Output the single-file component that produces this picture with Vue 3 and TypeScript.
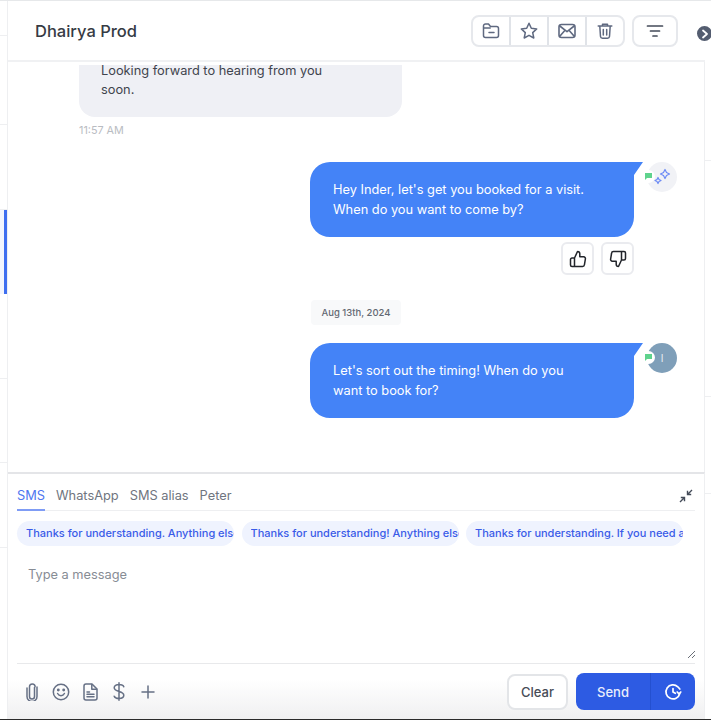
<script setup lang="ts">
const tabs: string[] = ['WhatsApp', 'SMS alias', 'Peter']
const chips: string[] = [
  'Thanks for understanding. Anything else I can help with?',
  'Thanks for understanding! Anything else you need today?',
  'Thanks for understanding. If you need anything, let me know.'
]
const railRows: number[] = [1, 2, 3]
</script>

<template>
  <div class="screen">
    <aside class="rail-left">
      <div class="rail-row first"></div>
      <div class="rail-row second"></div>
      <div class="rail-row"></div>
      <div class="rail-row active"></div>
      <div class="rail-row" v-for="r in railRows" :key="r"></div>
    </aside>

    <main class="panel">
      <header class="head">
        <h1 class="title">Dhairya Prod</h1>
        <div class="tools">
          <div class="tool-group">
            <button class="tool">
              <svg width="20" height="20" viewBox="0 0 20 20" fill="none" stroke="#5f6980" stroke-width="1.500" stroke-linejoin="round" stroke-linecap="round">
                <path d="M2.500 5a2 2 0 0 1 2-2h3l2 2.500h6a2 2 0 0 1 2 2v7a2 2 0 0 1-2 2h-11a2 2 0 0 1-2-2z" />
                <path d="M2.800 7h6.400M8 11.500h5" />
              </svg>
            </button>
            <button class="tool">
              <svg width="20" height="20" viewBox="0 0 20 20" fill="none" stroke="#5f6980" stroke-width="1.500" stroke-linejoin="round">
                <path d="M10 2.300l2.300 5 5.400.6-4 3.700 1.100 5.400-4.800-2.700-4.800 2.700 1.100-5.400-4-3.700 5.400-.6z" />
              </svg>
            </button>
            <button class="tool">
              <svg width="20" height="20" viewBox="0 0 20 20" fill="none" stroke="#5f6980" stroke-width="1.600" stroke-linejoin="round">
                <rect x="2" y="3.500" width="16" height="13" rx="2.500" />
                <path d="M2.800 5l7.200 5.600L17.200 5M2.800 15.200l5-5.800M17.200 15.200l-5-5.800" />
              </svg>
            </button>
            <button class="tool">
              <svg width="20" height="20" viewBox="0 0 20 20" fill="none" stroke="#5f6980" stroke-width="1.500" stroke-linecap="round" stroke-linejoin="round">
                <path d="M3.200 5h13.600M7.500 5V3.200h5V5M4.800 5l.7 10.500a2 2 0 0 0 2 1.800h5a2 2 0 0 0 2-1.800L15.200 5M8.300 8.500v5.500M11.700 8.500v5.500" />
              </svg>
            </button>
          </div>
          <button class="tool filter">
            <svg width="18" height="14" viewBox="0 0 18 14" fill="none" stroke="#444b59" stroke-width="1.700" stroke-linecap="round">
              <path d="M1.500 2h15M4.500 7h9M7 12h4" />
            </svg>
          </button>
        </div>
      </header>

      <section class="thread">
        <div class="incoming">
          <div class="bubble-clip">
            <div class="bubble-in">Looking forward to hearing from you soon.</div>
          </div>
          <div class="stamp">11:57 AM</div>
        </div>

        <div class="outgoing first-out">
          <div class="bubble-out">Hey Inder, let's get you booked for a visit. When do you want to come by?</div>
          <div class="sender">
            <span class="channel">
              <svg width="9" height="9" viewBox="0 0 9 9"><path d="M1 1h7v5H3L1 8z" fill="#5fd38d" /></svg>
            </span>
            <span class="avatar ai">
              <svg width="18" height="18" viewBox="0 0 18 18" fill="none" stroke="#6d8bf5" stroke-width="1.200" stroke-linejoin="round">
                <path d="M12 1.500l1.500 3 3 1.500-3 1.500-1.500 3-1.500-3-3-1.500 3-1.500z" />
                <path d="M5 9.500l1 2 2 1-2 1-1 2-1-2-2-1 2-1z" />
              </svg>
            </span>
          </div>
        </div>

        <div class="feedback">
          <button class="thumb">
            <svg width="18" height="18" viewBox="0 0 18 18" fill="none" stroke="#22252b" stroke-width="1.500" stroke-linejoin="round" stroke-linecap="round">
              <path d="M5.500 16.500H3a1.500 1.500 0 0 1-1.500-1.500V9.500A1.500 1.500 0 0 1 3 8h2.500zM5.500 8l3-6.500c1.400 0 2.300 1 2.300 2.300V6.800h3.900a1.700 1.700 0 0 1 1.700 2l-1 6a1.800 1.800 0 0 1-1.800 1.700H5.500" />
            </svg>
          </button>
          <button class="thumb">
            <svg width="18" height="18" viewBox="0 0 18 18" fill="none" stroke="#22252b" stroke-width="1.500" stroke-linejoin="round" stroke-linecap="round">
              <path d="M12.500 1.500H15A1.500 1.500 0 0 1 16.500 3v5.500A1.500 1.500 0 0 1 15 10h-2.500zM12.500 10l-3 6.500c-1.400 0-2.300-1-2.300-2.300V11.200H3.300a1.700 1.700 0 0 1-1.700-2l1-6a1.800 1.800 0 0 1 1.800-1.700h8.100" />
            </svg>
          </button>
        </div>

        <div class="date-wrap"><span class="date">Aug 13th, 2024</span></div>

        <div class="outgoing">
          <div class="bubble-out">Let's sort out the timing! When do you want to book for?</div>
          <div class="sender">
            <span class="channel">
              <svg width="9" height="9" viewBox="0 0 9 9"><path d="M1 1h7v5H3L1 8z" fill="#5fd38d" /></svg>
            </span>
            <span class="avatar person">I</span>
          </div>
        </div>
      </section>

      <section class="compose">
        <nav class="tabs">
          <span class="tab current">SMS</span>
          <span class="tab" v-for="t in tabs" :key="t">{{ t }}</span>
          <svg class="shrink" width="14" height="14" viewBox="0 0 14 14" fill="none" stroke="#444b59" stroke-width="1.400">
            <path d="M13 1L8.500 5.500M8.500 1.800v3.700h3.700M1 13l4.500-4.500M1.800 8.500h3.700v3.700" />
          </svg>
        </nav>

        <div class="chips">
          <span class="chip" v-for="c in chips" :key="c"><span class="chip-text">{{ c }}</span></span>
        </div>

        <div class="input">
          <span class="placeholder">Type a message</span>
          <svg class="grip" width="9" height="9" viewBox="0 0 9 9" stroke="#6a6f78" stroke-width="1">
            <path d="M1 8l7-7M5 8l3-3" />
          </svg>
        </div>

        <footer class="actions">
          <div class="icons">
            <span class="slot">
              <svg width="12" height="18" viewBox="0 0 12 18" fill="none" stroke="#667085" stroke-width="1.500" stroke-linecap="round">
                <path d="M8.500 4.500v9a2.500 2.500 0 0 1-5 0V3.800a2.800 2.800 0 0 1 5.600 0M1 5v8.500a5 5 0 0 0 10 0V4" />
              </svg>
            </span>
            <span class="slot">
              <svg width="18" height="18" viewBox="0 0 18 18" fill="none" stroke="#667085" stroke-width="1.500" stroke-linecap="round">
                <circle cx="9" cy="9" r="7.700" />
                <path d="M5.600 10.500c.8 1.500 2 2.200 3.400 2.200s2.600-.7 3.400-2.200" />
                <circle cx="6.300" cy="7" r=".7" fill="#667085" />
                <circle cx="11.700" cy="7" r=".7" fill="#667085" />
              </svg>
            </span>
            <span class="slot">
              <svg width="15" height="18" viewBox="0 0 15 18" fill="none" stroke="#667085" stroke-width="1.500" stroke-linecap="round" stroke-linejoin="round">
                <path d="M3 1h6l5 5v9a2 2 0 0 1-2 2H3a2 2 0 0 1-2-2V3a2 2 0 0 1 2-2z" />
                <path d="M8.800 1.500v4.800h4.800M4 9h2.500M4 11.300h7M4 13.700h7" />
              </svg>
            </span>
            <span class="slot">
              <svg width="12" height="19" viewBox="0 0 12 19" fill="none" stroke="#667085" stroke-width="1.500" stroke-linecap="round">
                <path d="M10.800 4.800C10.300 3.300 8.500 2.500 6 2.500 3.300 2.500 1.200 3.700 1.200 5.800c0 2.300 2.300 3 4.800 3.700 2.500.7 4.800 1.400 4.800 3.800 0 2-2.100 3.200-4.800 3.200-2.500 0-4.300-.9-4.800-2.300M6 .8v17.400" />
              </svg>
            </span>
            <span class="slot">
              <svg width="14" height="14" viewBox="0 0 14 14" fill="none" stroke="#667085" stroke-width="1.500" stroke-linecap="round">
                <path d="M7 1v12M1 7h12" />
              </svg>
            </span>
          </div>
          <div class="buttons">
            <button class="clear">Clear</button>
            <div class="send">
              <button class="send-main">Send</button>
              <button class="send-later">
                <svg width="18" height="18" viewBox="0 0 18 18" fill="none" stroke="#fff" stroke-width="1.700" stroke-linecap="round" stroke-linejoin="round">
                  <path d="M15.800 10.500A7 7 0 1 1 13.800 3.800L15.800 6" />
                  <path d="M16.800 9l-1.800 1.800L13.200 9" />
                  <path d="M9 5.500V9l2.300 1.300" />
                </svg>
              </button>
            </div>
          </div>
        </footer>
      </section>
    </main>

    <aside class="rail-right">
      <div class="right-row tall"></div>
      <div class="right-row mid"></div>
      <div class="right-row short"></div>
    </aside>

    <button class="collapse">
      <svg width="8" height="10" viewBox="0 0 8 10" fill="none" stroke="#fff" stroke-width="1.800" stroke-linecap="round" stroke-linejoin="round">
        <path d="M2 1.500L6 5 2 8.500" />
      </svg>
    </button>
  </div>
</template>

<style scoped>
.screen {
  position: relative;
  display: flex;
  width: 711px;
  height: 720px;
  overflow: hidden;
  background: #fff;
  font-family: Inter, "Liberation Sans", sans-serif;
  color: #2f343d;
  border-top: 1px solid #e6e8ea;
  border-bottom: 1px solid #2b2b2b;
  box-sizing: border-box;
}
button {
  font-family: inherit;
  padding: 0;
  background: none;
  cursor: pointer;
}
.rail-left {
  width: 8px;
  flex: none;
  border-right: 1px solid #eeeff1;
  box-sizing: border-box;
}
.rail-row {
  height: 84.500px;
  border-bottom: 1px solid #eeeff1;
  box-sizing: border-box;
}
.rail-row.first {
  height: 35px;
}
.rail-row.second {
  height: 89px;
}
.rail-row.active {
  background: #f3f6fe;
  border-right: 3px solid #3f6ff0;
  border-bottom: none;
}
.panel {
  width: 697px;
  flex: none;
  display: flex;
  flex-direction: column;
  min-width: 0;
}
.head {
  height: 61px;
  flex: none;
  display: flex;
  align-items: center;
  justify-content: space-between;
  padding: 1px 27px 0;
  border-bottom: 2px solid #f0f1f3;
  box-sizing: border-box;
}
.title {
  margin: 0;
  font-size: 16.500px;
  font-weight: 500;
  color: #363b44;
}
.tools {
  display: flex;
  gap: 7px;
}
.tool-group {
  display: flex;
  width: 154px;
  height: 32px;
  border: 2px solid #e6e8ec;
  border-radius: 8px;
  box-sizing: border-box;
}
.tool {
  flex: 1;
  height: 100%;
  display: flex;
  align-items: center;
  justify-content: center;
  border: none;
  border-right: 2px solid #e0e3e8;
}
.tool:last-child {
  border-right: none;
}
.tool.filter {
  flex: none;
  width: 46px;
  height: 32px;
  border: 2px solid #e6e8ec;
  border-radius: 8px;
  box-sizing: border-box;
}
.thread {
  flex: 1;
  min-height: 0;
  padding: 3px 27px 0 0;
  overflow: hidden;
  border-right: 1px solid #eeeff1;
}
.incoming {
  margin-left: 71px;
}
.bubble-clip {
  width: 323px;
  height: 52px;
  overflow: hidden;
  border-radius: 0 0 16px 16px;
}
.bubble-in {
  height: 56px;
  margin-top: -4px;
  box-sizing: border-box;
  padding: 0 60px 0 22px;
  background: #eff0f5;
  font-size: 12.800px;
  line-height: 19px;
  color: #3f444d;
}
.stamp {
  margin-top: 7px;
  font-size: 10.800px;
  line-height: 14px;
  color: #b9bcc2;
}
.outgoing {
  display: flex;
  justify-content: flex-end;
  align-items: flex-start;
}
.first-out {
  margin-top: 24px;
}
.bubble-out {
  width: 333px;
  height: 75px;
  box-sizing: border-box;
  padding: 18px 52px 0 23px;
  background: #4483f7;
  color: #fff;
  font-size: 12.800px;
  line-height: 20px;
  clip-path: path("M20 0H333L324 13V55A20 20 0 0 1 304 75H20A20 20 0 0 1 0 55V20A20 20 0 0 1 20 0Z");
}
.sender {
  width: 34px;
  height: 30px;
  display: flex;
  align-items: center;
  position: relative;
}
.channel {
  position: absolute;
  left: -1px;
  top: 8px;
  width: 13px;
  height: 13px;
  background: #fff;
  border-radius: 50%;
  z-index: 1;
  display: flex;
  align-items: center;
  justify-content: center;
}
.avatar {
  width: 30px;
  height: 30px;
  border-radius: 50%;
  margin-left: 4px;
  display: flex;
  align-items: center;
  justify-content: center;
  font-size: 10px;
}
.avatar.ai {
  background: #f1f2f6;
}
.avatar.person {
  background: #7f9fb9;
  color: #e8eef3;
}
.feedback {
  display: flex;
  justify-content: flex-end;
  gap: 7px;
  margin: 5px 43px 0 0;
}
.thumb {
  width: 33px;
  height: 33px;
  border: 2px solid #eaebef;
  border-radius: 6px;
  display: flex;
  align-items: center;
  justify-content: center;
  box-sizing: border-box;
}
.date-wrap {
  margin: 25px 0 18px 303px;
  height: 25px;
}
.date {
  display: inline-block;
  height: 25px;
  line-height: 25px;
  padding: 0 10.500px;
  background: #f8f9fa;
  border-radius: 4px;
  font-size: 9.500px;
  font-weight: 500;
  color: #646973;
}
.compose {
  height: 247px;
  flex: none;
  box-sizing: border-box;
  border-top: 2px solid #e4e5e8;
  border-right: 1px solid #eeeff1;
  padding: 0 9px;
  display: flex;
  flex-direction: column;
  background: linear-gradient(#fff 0, #fff 205px, #f0f0f1 245px);
}
.tabs {
  height: 37px;
  flex: none;
  display: flex;
  align-items: flex-start;
  gap: 11px;
  border-bottom: 1.500px solid #eeeff1;
  position: relative;
  box-sizing: border-box;
}
.tab {
  height: 37px;
  line-height: 43px;
  font-size: 12.800px;
  color: #6f7580;
  box-sizing: border-box;
}
.tab.current {
  color: #4f76f0;
  border-bottom: 2px solid #7f9cf5;
}
.shrink {
  position: absolute;
  right: 2px;
  top: 15px;
}
.chips {
  display: flex;
  gap: 7.500px;
  margin-top: 10px;
  flex: none;
}
.chip {
  width: 217px;
  height: 25px;
  flex: none;
  box-sizing: border-box;
  padding: 0 0 0 9px;
  background: #eff3fe;
  border-radius: 13px;
  overflow: hidden;
}
.chip-text {
  display: block;
  width: 208px;
  overflow: hidden;
  white-space: nowrap;
  font-size: 11px;
  line-height: 25px;
  font-weight: 500;
  color: #3a5be8;
}
.input {
  flex: 1;
  position: relative;
  padding: 17px 11px 0;
  border-bottom: 1.500px solid #e8e9eb;
  min-height: 0;
}
.placeholder {
  font-size: 12.800px;
  line-height: 18px;
  color: #878c95;
}
.grip {
  position: absolute;
  right: -1px;
  bottom: 4px;
}
.actions {
  height: 55px;
  flex: none;
  display: flex;
  align-items: center;
  justify-content: space-between;
  box-sizing: border-box;
}
.icons {
  display: flex;
  align-items: center;
  padding-left: .5px;
}
.slot {
  width: 29px;
  display: flex;
  align-items: center;
  justify-content: center;
}
.buttons {
  display: flex;
  align-items: center;
  gap: 8px;
}
.clear {
  width: 61px;
  height: 36px;
  background: #fff;
  border: 2px solid #e3e5e8;
  border-radius: 8px;
  font-size: 13px;
  font-weight: 500;
  color: #474c57;
  box-sizing: border-box;
}
.send {
  display: flex;
  height: 37px;
  width: 119px;
  background: #2d5be3;
  border-radius: 8px;
  overflow: hidden;
}
.send-main {
  flex: 1;
  border: none;
  border-right: 1px solid #2450d0;
  color: #e9eefc;
  font-size: 13px;
  font-weight: 500;
}
.send-later {
  width: 44px;
  border: none;
  display: flex;
  align-items: center;
  justify-content: center;
}
.rail-right {
  width: 6px;
  flex: none;
}
.right-row {
  border-bottom: 1px solid #eeeff1;
  box-sizing: border-box;
}
.right-row.tall {
  height: 160px;
}
.right-row.mid {
  height: 236px;
}
.right-row.short {
  height: 97px;
}
.collapse {
  position: absolute;
  left: 697px;
  top: 25px;
  width: 15px;
  height: 15px;
  border: none;
  border-radius: 50%;
  background: #545d70;
  display: flex;
  align-items: center;
  justify-content: center;
}
</style>
